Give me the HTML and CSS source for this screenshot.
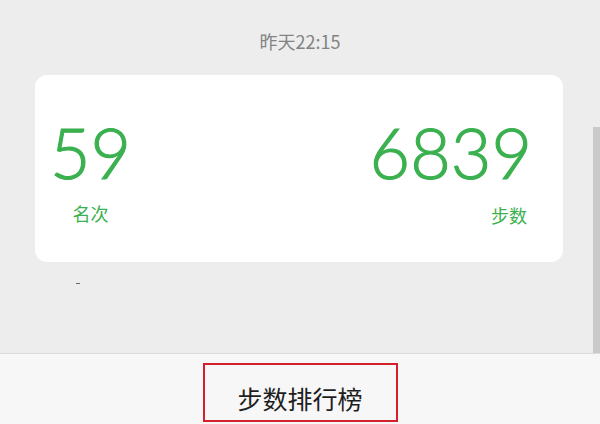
FILE: index.html
```html
<html>
<head>
    <meta charset="utf-8">
    <title>步数排行榜</title>
    <link rel="stylesheet" href="styles.css">
</head>
<body>
    <div class="screen">
        <div class="chat">
            <!-- timestamp -->
            <div class="time">昨天22:15</div>

            <!-- step card -->
            <div class="card">
                <div class="stat stat-left">
                    <div class="num">59</div>
                    <div class="label">名次</div>
                </div>
                <div class="stat stat-right">
                    <div class="num">6839</div>
                    <div class="label">步数</div>
                </div>
            </div>
            <div class="speck"></div>

            <div class="scroll-thumb"></div>
        </div>

        <!-- bottom menu -->
        <div class="menu">
            <div class="menu-item">步数排行榜</div>
        </div>
    </div>
</body>
</html>
```

FILE: styles.css
```css
body {
    margin: 0;
    font-family: "Noto Sans CJK SC", "Noto Sans", sans-serif;
    background-color: #ededed;
}

.screen {
    width: 600px;
    height: 424px;
    display: flex;
    flex-direction: column;
    overflow: hidden;
}

.chat {
    position: relative;
    height: 353px;
    background-color: #ededed;
}

.time {
    margin-top: 31px;
    text-align: center;
    font-size: 18px;
    line-height: 20px;
    color: #838383;
}

.card {
    margin: 24px 0 0 35px;
    width: 528px;
    height: 187px;
    box-sizing: border-box;
    padding: 42px 31px 0 15px;
    background-color: #ffffff;
    border-radius: 12px;
    display: flex;
    justify-content: space-between;
    color: #3bb04f;
}

.stat {
    display: flex;
    flex-direction: column;
}

.stat-left {
    align-items: center;
}

.stat-right {
    align-items: flex-end;
}

.num {
    font-family: Lato, "Liberation Sans", sans-serif;
    font-weight: 300;
    font-size: 70px;
    line-height: 1;
    -webkit-text-stroke: 1.1px #3bb04f;
}

.label {
    margin-top: 17px;
    font-size: 18px;
    line-height: 1;
}

.stat-right .label {
    margin-right: 5px;
    margin-top: 19px;
}

.speck {
    margin: 21px 0 0 76px;
    width: 4px;
    height: 1px;
    background-color: #666;
}

.scroll-thumb {
    position: absolute;
    right: 0;
    top: 127px;
    width: 7px;
    height: 226px;
    background-color: #c9c9c9;
}

.menu {
    flex: 1;
    background-color: #f7f7f7;
    border-top: 1px solid #dcdcdc;
    display: flex;
    justify-content: center;
}

.menu-item {
    margin-top: 9px;
    width: 195px;
    height: 59px;
    box-sizing: border-box;
    border: 2px solid #d3202b;
    padding-top: 21px;
    text-align: center;
    font-size: 25px;
    line-height: 1;
    color: #1e1e1e;
}
```
